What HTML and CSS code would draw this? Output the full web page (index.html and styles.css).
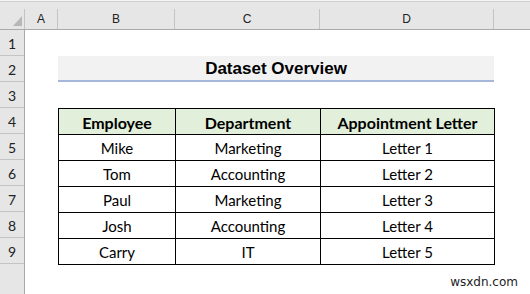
FILE: index.html
```html
<!DOCTYPE html>
<html>
<head>
<meta charset="utf-8">
<link rel="stylesheet" href="styles.css">
</head>
<body>
<div class="sheet">
  <div class="topstrip"></div>
  <div class="colhead">
    <div class="corner"><span class="tri"></span></div>
    <div class="ch ch-a">A</div>
    <div class="ch ch-b">B</div>
    <div class="ch ch-c">C</div>
    <div class="ch ch-d">D</div>
    <div class="ch ch-e"></div>
  </div>
  <div class="body">
    <div class="rownums">
      <div class="rn">1</div>
      <div class="rn">2</div>
      <div class="rn">3</div>
      <div class="rn">4</div>
      <div class="rn">5</div>
      <div class="rn">6</div>
      <div class="rn">7</div>
      <div class="rn">8</div>
      <div class="rn">9</div>
      <div class="rn rn-empty"></div>
    </div>
    <div class="cells">
      <div class="title">Dataset Overview</div>
      <table class="data">
        <colgroup><col class="c-b"><col class="c-c"><col class="c-d"></colgroup>
        <thead>
          <tr><th>Employee</th><th>Department</th><th>Appointment Letter</th></tr>
        </thead>
        <tbody>
          <tr><td>Mike</td><td>Marketing</td><td>Letter 1</td></tr>
          <tr><td>Tom</td><td>Accounting</td><td>Letter 2</td></tr>
          <tr><td>Paul</td><td>Marketing</td><td>Letter 3</td></tr>
          <tr><td>Josh</td><td>Accounting</td><td>Letter 4</td></tr>
          <tr><td>Carry</td><td>IT</td><td>Letter 5</td></tr>
        </tbody>
      </table>
    </div>
  </div>
  <div class="watermark">wsxdn.com</div>
</div>
</body>
</html>
```
FILE: styles.css
```css
* { box-sizing: border-box; }
html, body { margin: 0; padding: 0; background: #ffffff; }
body { width: 530px; height: 294px; overflow: hidden; }

.sheet {
  position: relative;
  width: 530px;
  height: 294px;
  font-family: Lato, "Open Sans", sans-serif;
  color: #000;
}

.topstrip {
  height: 2px;
  background: #f4f4f4;
  border-bottom: 1px solid #cfcfcf;
}

.colhead {
  display: flex;
  height: 28px;
  padding-top: 7px;
  background: #e6e6e6;
  border-bottom: 1px solid #a9a9a9;
}
.corner {
  width: 25px;
  position: relative;
  border-right: 1px solid #c4c4c4;
}
.tri {
  position: absolute;
  right: 2px;
  bottom: 3px;
  width: 0;
  height: 0;
  border-left: 9px solid transparent;
  border-bottom: 10px solid #b7b7b7;
}
.ch {
  display: flex;
  align-items: center;
  justify-content: center;
  font-family: "Liberation Sans", Arial, sans-serif;
  font-size: 12px;
  color: #222;
  border-right: 1px solid #c4c4c4;
  padding-bottom: 1px;
}
.ch-a { width: 33px; }
.ch-b { width: 117px; }
.ch-c { width: 145px; }
.ch-d { width: 174px; }
.ch-e { flex: 1; border-right: none; }

.body {
  display: flex;
}
.rownums {
  width: 25px;
  height: 264px;
  background: #e6e6e6;
  border-right: 1px solid #a9a9a9;
}
.rn {
  height: 26px;
  border-bottom: 1px solid #c4c4c4;
  display: flex;
  align-items: center;
  justify-content: center;
  font-size: 14px;
  color: #222;
  padding-top: 1px;
}
.rn-empty { border-bottom: none; height: 30px; }

.cells {
  padding-top: 26px;
  padding-left: 33px;
}

.title {
  width: 436px;
  height: 26px;
  background: #f2f2f2;
  border-bottom: 2px solid #a6b7da;
  display: flex;
  align-items: center;
  justify-content: center;
  font-family: "Liberation Sans", Arial, sans-serif;
  font-weight: bold;
  font-size: 17px;
  padding-top: 1px;
}

.data {
  margin-top: 26px;
  border-collapse: collapse;
  width: 436px;
  table-layout: fixed;
  font-size: 15px;
}
.c-b { width: 117px; }
.c-c { width: 145px; }
.c-d { width: 174px; }
.data th, .data td {
  border: 1px solid #000;
  height: 26px;
  padding: 1px 0 0;
  text-align: center;
  vertical-align: middle;
  white-space: nowrap;
}
.data th {
  background: #e2efda;
  font-weight: bold;
  font-size: 16px;
}

.watermark {
  position: absolute;
  right: 12px;
  bottom: 5px;
  font-family: "DejaVu Sans", sans-serif;
  font-size: 12px;
  color: #222;
}
```
